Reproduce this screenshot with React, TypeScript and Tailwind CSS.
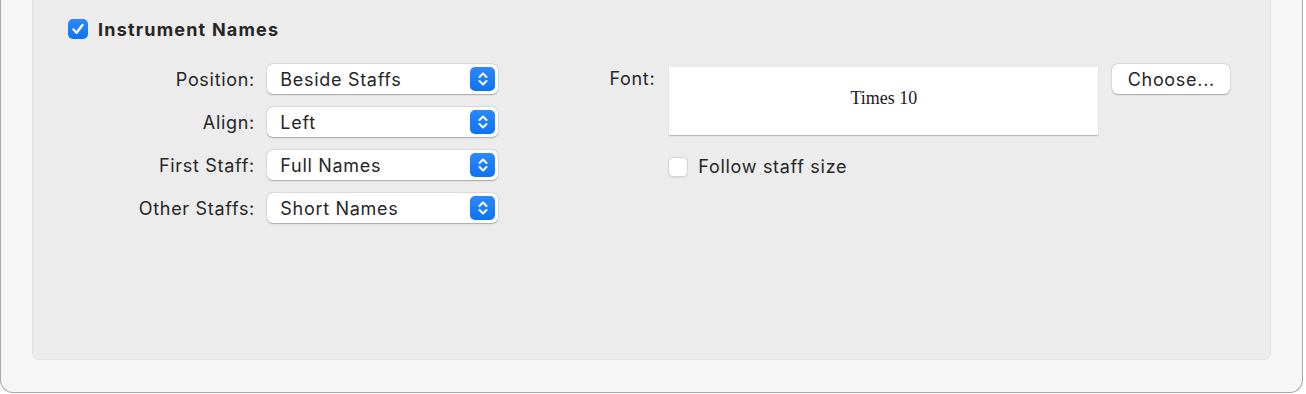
import React from "react";

const font = { fontFamily: "Inter, 'Liberation Sans', Arial, sans-serif" };

function Chevrons() {
  return (
    <svg width="12" height="16" viewBox="0 0 12 16" fill="none" stroke="white" strokeWidth="2" strokeLinecap="round" strokeLinejoin="round">
      <path d="M2.5 6 L6 2.5 L9.5 6" />
      <path d="M2.5 10 L6 13.5 L9.5 10" />
    </svg>
  );
}

function Select({ value }: { value: string }) {
  return (
    <div className="flex h-[30px] w-[231px] items-center rounded-[6px] bg-white pl-[13px] pr-[3px] shadow-[0_0.5px_1.5px_rgba(0,0,0,0.28),0_0_0_0.5px_rgba(0,0,0,0.06)]">
      <span className="flex-1 text-[18px] tracking-[0.7px] text-[#262626]">{value}</span>
      <div className="flex h-[24px] w-[25px] items-center justify-center rounded-[5px] bg-gradient-to-b from-[#2b88ff] to-[#0a74f5]">
        <Chevrons />
      </div>
    </div>
  );
}

function Row({ label, value }: { label: string; value: string }) {
  return (
    <div className="flex h-[30px] items-center gap-[13px]">
      <div className="mr-[-0.7px] w-[222px] text-right text-[18px] tracking-[0.7px] text-[#262626]">{label}</div>
      <Select value={value} />
    </div>
  );
}

export default function App() {
  return (
    <div className="h-[394px] w-[1306px] bg-white" style={font}>
      <div className="h-[393px] w-[1303px] rounded-b-[13px] border-x border-b border-[#a8a8a8] bg-[#f6f6f6] pl-[31px]">
        <div className="h-[360px] w-[1239px] rounded-b-[7px] border-x border-b border-[#e2e2e2] bg-[#ececec]">
          <div className="flex h-[39px] items-end pl-[35px]">
            <div className="flex h-[20px] items-center gap-[10px]">
              <div className="flex h-[20px] w-[20px] items-center justify-center rounded-[5px] bg-gradient-to-b from-[#2b88ff] to-[#0a74f5]">
                <svg width="14" height="14" viewBox="0 0 14 14" fill="none" stroke="white" strokeWidth="2.4" strokeLinecap="round" strokeLinejoin="round">
                  <path d="M2.5 7.5 L5.5 10.8 L11.5 3" />
                </svg>
              </div>
              <span className="text-[18px] font-bold tracking-[1.2px] text-[#262626]">Instrument Names</span>
            </div>
          </div>

          <div className="mt-[25px] flex">
            <div className="flex flex-col gap-[13px]">
              <Row label="Position:" value="Beside Staffs" />
              <Row label="Align:" value="Left" />
              <Row label="First Staff:" value="Full Names" />
              <Row label="Other Staffs:" value="Short Names" />
            </div>

            <div className="ml-[97px] flex flex-col">
              <div className="flex items-start gap-[14px]">
                <div className="h-[30px] w-[60px] text-right text-[18px] leading-[30px] tracking-[0.7px] text-[#262626]">Font:</div>
                <div className="mt-[3px] flex h-[68px] w-[429px] items-center justify-center bg-white pb-[6px] shadow-[0_1px_1px_rgba(0,0,0,0.22)]">
                  <span className="text-[18px] text-[#1a1a1a]" style={{ fontFamily: "'Liberation Serif', 'Times New Roman', serif" }}>
                    Times 10
                  </span>
                </div>
                <div className="flex h-[30px] w-[118px] items-center justify-center rounded-[6px] bg-white text-[18px] tracking-[0.7px] text-[#262626] shadow-[0_0.5px_1.5px_rgba(0,0,0,0.28),0_0_0_0.5px_rgba(0,0,0,0.06)]">
                  Choose...
                </div>
              </div>
              <div className="ml-[73px] mt-[18px] flex items-center gap-[10px]">
                <div className="h-[20px] w-[20px] rounded-[5px] border border-[#d4d4d4] bg-white shadow-[0_0.5px_1px_rgba(0,0,0,0.08)]" />
                <span className="text-[18px] tracking-[0.7px] text-[#262626]">Follow staff size</span>
              </div>
            </div>
          </div>
        </div>
      </div>
    </div>
  );
}
